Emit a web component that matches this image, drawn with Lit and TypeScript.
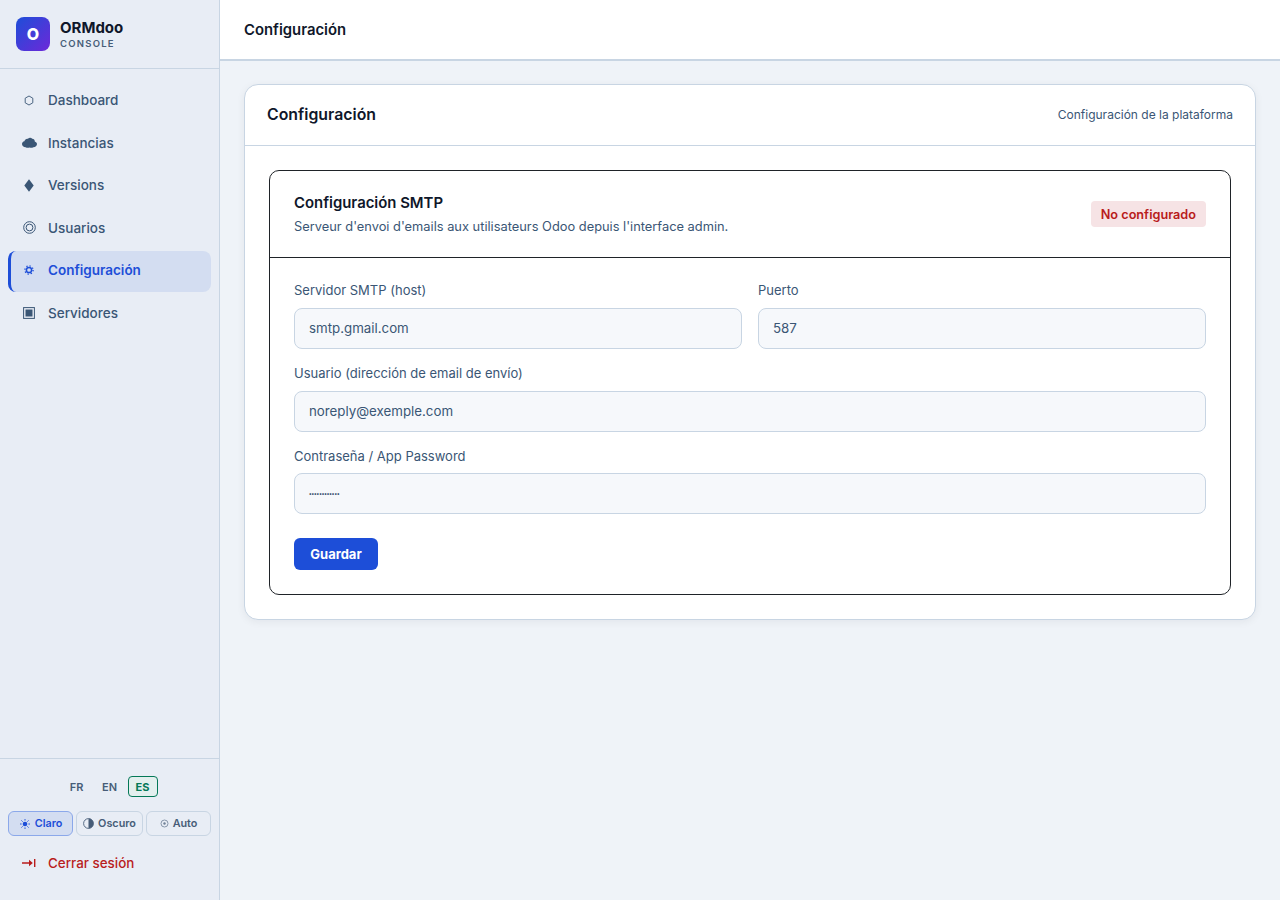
import { LitElement, html, css, svg } from "lit";
import { customElement } from "lit/decorators.js";

const ICONS: Record<string, unknown> = {
  Dashboard: html`<svg width="10" height="11" viewBox="0 0 10 11"><path d="M5 1 8.8 3.2V7.8L5 10 1.2 7.8V3.2Z" fill="none" stroke="currentColor" stroke-width=".9"/></svg>`,
  Instancias: html`<svg width="15" height="11" viewBox="0 0 15 11"><path d="M3.6 10.2C1.6 10 0 8.9 0 7 0 5.6 1 4.6 2.4 4.3 2.8 2.4 4.6 1.3 6 1.8 7 .4 9.2.4 10.2 1.8 11.6 1.7 12.8 2.9 12.8 4.4 14 4.8 15 5.8 15 7 15 8.9 13.4 10 11.4 10.2 10 10.9 8.6 10.9 7.5 10.4 6.4 10.9 4.8 10.9 3.6 10.2Z" fill="currentColor"/></svg>`,
  Versions: html`<svg width="10" height="13" viewBox="0 0 10 13"><path d="M5 .3 9.7 6.5 5 12.7 .3 6.5Z" fill="currentColor"/></svg>`,
  Usuarios: html`<svg width="13" height="13" viewBox="0 0 13 13" fill="none" stroke="currentColor"><circle cx="6.5" cy="6.5" r="5.8" stroke-width="1"/><circle cx="6.5" cy="6.5" r="3.4" stroke-width="1"/></svg>`,
  "Configuración": html`<svg width="10" height="10" viewBox="0 0 10 10" fill="none" stroke="currentColor"><circle cx="5" cy="5" r="2.6" stroke-width="1.5"/><circle cx="5" cy="5" r="4.1" stroke-width="1.3" stroke-dasharray="1.3 1.92"/></svg>`,
  Servidores: html`<svg width="12" height="12" viewBox="0 0 12 12"><rect x=".6" y=".6" width="10.8" height="10.8" fill="none" stroke="currentColor" stroke-width="1"/><rect x="2.5" y="2.5" width="7" height="7" fill="currentColor"/></svg>`,
};
const NAV = ["Dashboard", "Instancias", "Versions", "Usuarios", "Configuración", "Servidores"];

const rays = [0, 45, 90, 135, 180, 225, 270, 315].map(
  (a) => svg`<line x1="6" y1="1" x2="6" y2="2.6" transform="rotate(${a} 6 6)"/>`
);

@customElement("app-root")
export class AppRoot extends LitElement {
  static styles = css`
    :host { display: block; font-family: Inter, "Noto Sans", sans-serif; color: #0f172a; }
    * { box-sizing: border-box; }
    .app { display: flex; height: 900px; background: #eff3f8; }
    .side { width: 220px; flex: none; background: #e8edf5; border-right: 1px solid #c8d5e3; display: flex; flex-direction: column; }
    .brand { height: 69px; flex: none; border-bottom: 1px solid #c8d5e3; display: flex; align-items: center; gap: 10px; padding: 0 16px; }
    .logo { width: 34px; height: 34px; border-radius: 8px; background: linear-gradient(135deg, #1d4ed8, #6d28d9); color: #fff; font-weight: 800; font-size: 16px; display: flex; align-items: center; justify-content: center; }
    .bname { font-size: 15px; font-weight: 700; line-height: 18px; color: #0f172a; }
    .bsub { font-size: 9.5px; font-weight: 600; letter-spacing: 1.25px; line-height: 12px; color: #475d78; margin-top: 1px; }
    nav { flex: 1; padding: 11.6px 8px; display: flex; flex-direction: column; gap: 1.6px; }
    .item { height: 41px; display: flex; align-items: center; gap: 10px; padding: 0 9px 2px; border-radius: 8px; font-size: 13.5px; font-weight: 500; color: #3a5675; border-left: 3px solid transparent; }
    .item.on { background: #d3ddf1; color: #1d4ed8; font-weight: 600; border-left-color: #1d4ed8; }
    .ic { width: 18px; height: 14px; flex: none; display: flex; align-items: center; justify-content: center; }
    .foot { border-top: 1px solid #c8d5e3; padding: 17px 8px 0; height: 142px; flex: none; }
    .langs { display: flex; justify-content: center; gap: 3px; }
    .lang { width: 30px; height: 21px; display: flex; align-items: center; justify-content: center; font-size: 11px; font-weight: 600; color: #475d78; border: 1px solid transparent; border-radius: 4px; }
    .lang.on { color: #047857; border: 1px solid #047857; background: #e3efee; font-weight: 700; }
    .themes { display: flex; gap: 3px; margin-top: 14px; }
    .th { height: 25px; border: 1px solid #c8d5e3; border-radius: 6px; display: flex; align-items: center; justify-content: center; gap: 4px; font-size: 10.8px; font-weight: 600; color: #475d78; }
    .th.a { width: 65px; background: #d3ddf1; border-color: #8ba8ea; color: #1d4ed8; }
    .th.b { width: 67px; }
    .th.c { width: 65px; }
    .th.c svg { opacity: .75; }
    .logout { height: 37px; margin-top: 8px; display: flex; align-items: center; gap: 10px; padding: 0 12px; font-size: 13.4px; font-weight: 500; color: #b91c1c; }
    main { flex: 1; min-width: 0; display: flex; flex-direction: column; }
    .top { height: 61px; background: #fff; border-bottom: 2px solid #c8d5e3; padding: 0 24px; display: flex; align-items: center; font-size: 14.85px; font-weight: 600; color: #0f172a; flex: none; }
    .content { padding: 23px 24px 24px; }
    .card { background: #fff; border: 1px solid #c8d5e3; border-radius: 14px; box-shadow: 0 2px 8px rgba(15, 23, 42, .06); padding-bottom: 24px; }
    .chead { height: 61px; border-bottom: 1px solid #c8d5e3; display: flex; align-items: center; justify-content: space-between; padding: 0 22px 2px; }
    .ctitle { font-size: 15.85px; font-weight: 600; }
    .csub { font-size: 12px; color: #3a5675; }
    .box { margin: 24px 24px 0; border: 1px solid #1f2328; border-radius: 10px; }
    .bhead { height: 87px; border-bottom: 1px solid #1f2328; display: flex; align-items: center; justify-content: space-between; padding: 0 24px; }
    .btitle { font-size: 14.9px; font-weight: 600; line-height: 20px; }
    .bdesc { font-size: 12.85px; color: #3a5675; line-height: 18px; margin-top: 5px; }
    .badge { height: 26px; display: flex; align-items: center; padding: 0 10px; background: #f6e3e5; color: #b91c1c; border-radius: 4px; font-size: 12.7px; font-weight: 600; }
    .form { padding: 24px; display: flex; flex-direction: column; gap: 16px; }
    .row { display: grid; grid-template-columns: 1fr 1fr; gap: 16px; }
    .field { display: flex; flex-direction: column; gap: 8.8px; }
    label { font-size: 13px; line-height: 17px; font-weight: 400; color: #3a5675; }
    .in { height: 41px; border: 1px solid #c8d5e3; border-radius: 8px; background: #f6f8fb; padding: 0 14px 1px; display: flex; align-items: center; font-size: 13.3px; color: #3a5675; }
    .pw { font-size: 5.8px; font-weight: 800; color: #1f3c5e; }
    button { align-self: flex-start; width: 84px; height: 32px; margin-top: 8px; border: 0; border-radius: 6px; background: #1d4ed8; color: #fff; font: 700 13px Inter, sans-serif; }
  `;

  render() {
    return html`<div class="app">
      <aside class="side">
        <div class="brand">
          <div class="logo">O</div>
          <div><div class="bname">ORMdoo</div><div class="bsub">CONSOLE</div></div>
        </div>
        <nav>
          ${NAV.map((t) => html`<div class="item ${t === "Configuración" ? "on" : ""}"><span class="ic">${ICONS[t]}</span>${t}</div>`)}
        </nav>
        <div class="foot">
          <div class="langs">
            <div class="lang">FR</div><div class="lang">EN</div><div class="lang on">ES</div>
          </div>
          <div class="themes">
            <div class="th a"><svg width="12" height="12" viewBox="0 0 12 12" fill="currentColor" stroke="currentColor" stroke-width=".9"><circle cx="6" cy="6" r="2.3" stroke="none"/>${rays}</svg>Claro</div>
            <div class="th b"><svg width="11" height="11" viewBox="0 0 11 11"><circle cx="5.5" cy="5.5" r="4.9" fill="none" stroke="currentColor" stroke-width=".9"/><path d="M5.5.6a4.9 4.9 0 0 1 0 9.8Z" fill="currentColor"/></svg>Oscuro</div>
            <div class="th c"><svg width="9" height="9" viewBox="0 0 9 9"><circle cx="4.5" cy="4.5" r="3.5" fill="none" stroke="currentColor" stroke-width=".8"/><circle cx="4.5" cy="4.5" r="1.2" fill="currentColor"/></svg>Auto</div>
          </div>
          <div class="logout"><span class="ic"><svg width="14" height="10" viewBox="0 0 14 10"><path d="M0 4.3H7V1.8L10.8 5 7 8.2V5.7H0Z" fill="currentColor"/><rect x="12" y="1" width="1.4" height="8" fill="currentColor"/></svg></span>Cerrar sesión</div>
        </div>
      </aside>
      <main>
        <div class="top">Configuración</div>
        <div class="content">
          <section class="card">
            <div class="chead"><div class="ctitle">Configuración</div><div class="csub">Configuración de la plataforma</div></div>
            <div class="box">
              <div class="bhead">
                <div>
                  <div class="btitle">Configuración SMTP</div>
                  <div class="bdesc">Serveur d'envoi d'emails aux utilisateurs Odoo depuis l'interface admin.</div>
                </div>
                <div class="badge">No configurado</div>
              </div>
              <div class="form">
                <div class="row">
                  <div class="field"><label>Servidor SMTP (host)</label><div class="in">smtp.gmail.com</div></div>
                  <div class="field"><label>Puerto</label><div class="in">587</div></div>
                </div>
                <div class="field"><label>Usuario (dirección de email de envío)</label><div class="in">noreply@exemple.com</div></div>
                <div class="field"><label>Contraseña / App Password</label><div class="in pw">••••••••••••</div></div>
                <button>Guardar</button>
              </div>
            </div>
          </section>
        </div>
      </main>
    </div>`;
  }
}
